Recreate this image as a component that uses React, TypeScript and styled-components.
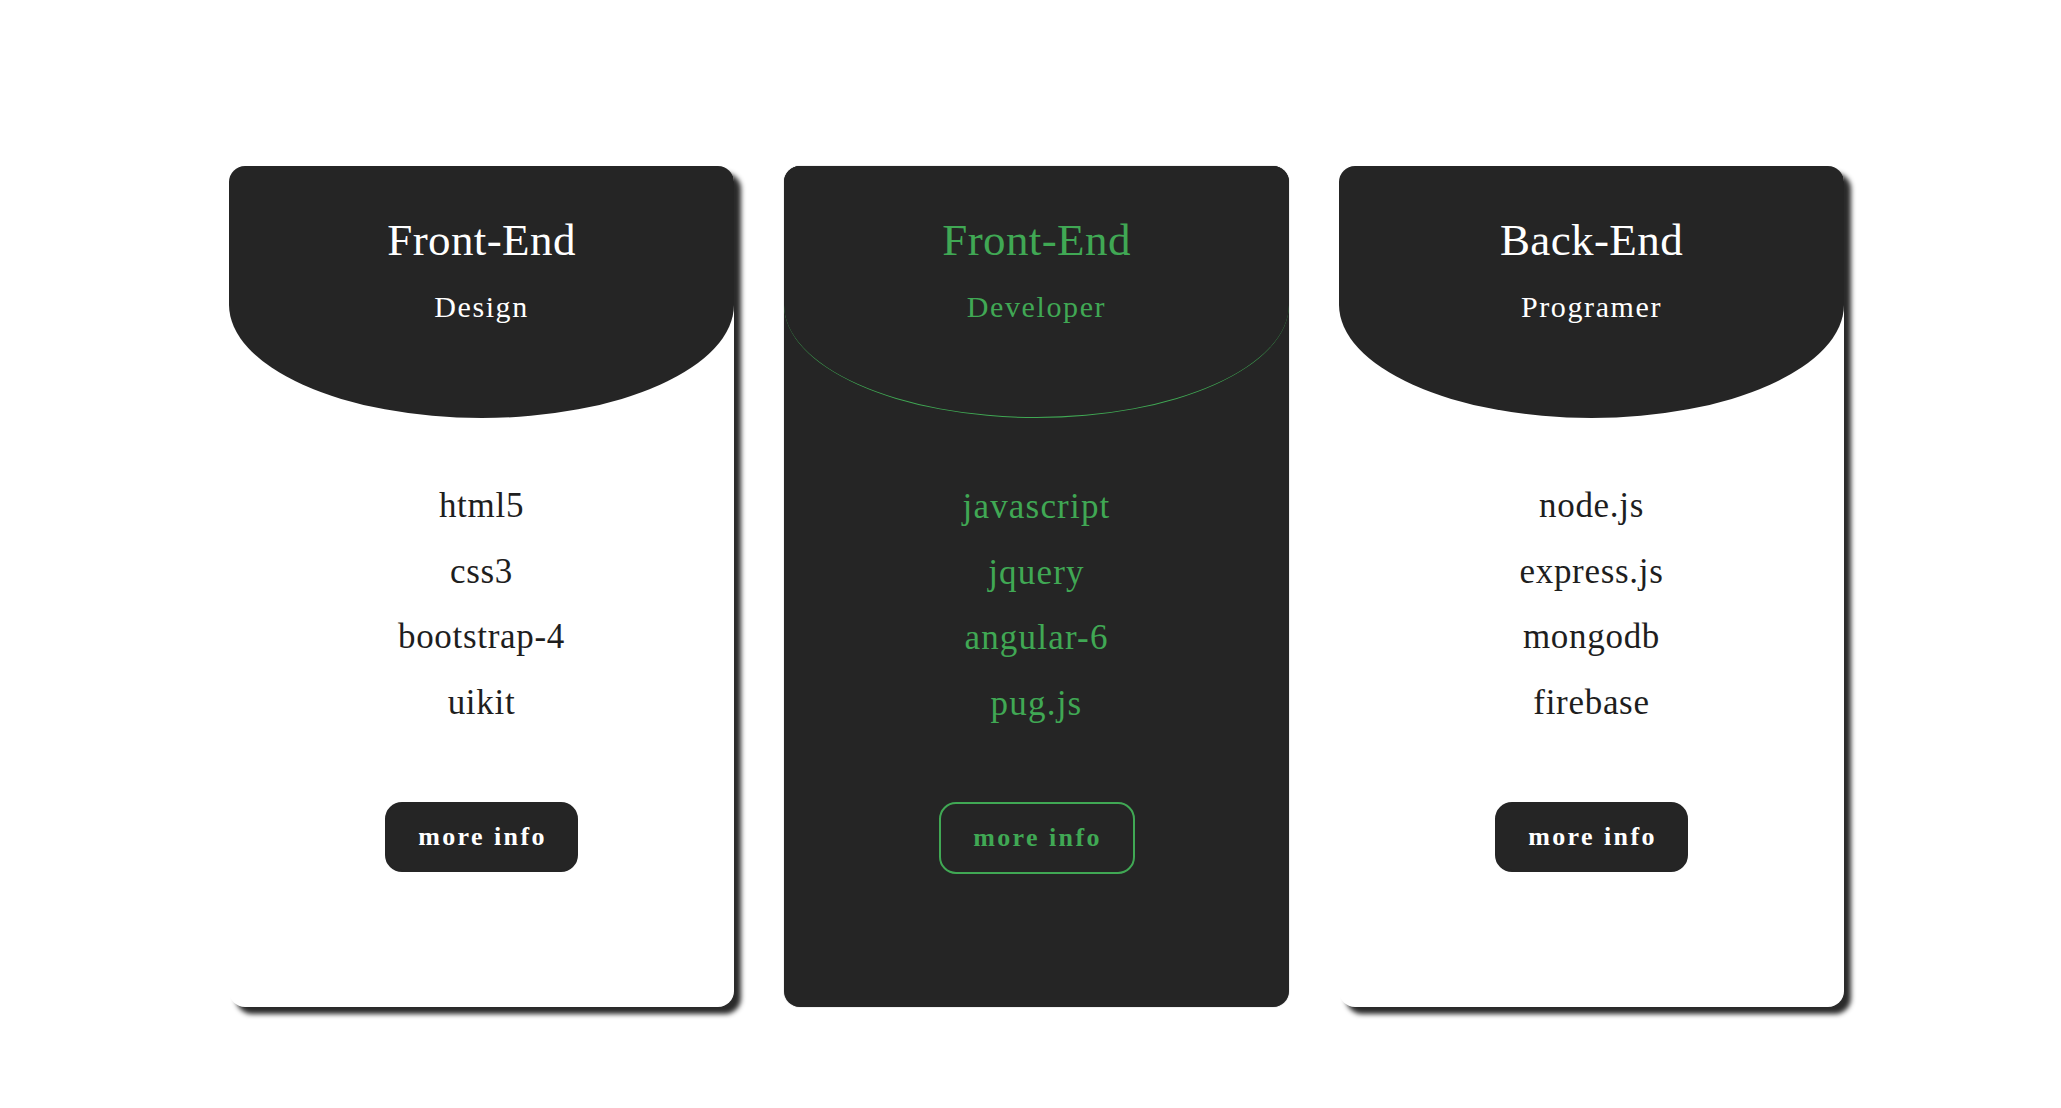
import React from "react";
import styled, { createGlobalStyle, css } from "styled-components";

const GREEN = "#40a854";
const DARK = "#252525";

const Global = createGlobalStyle`
  html, body {
    margin: 0;
    padding: 0;
    background: #ffffff;
  }
  body {
    font-family: "Liberation Serif", "Times New Roman", serif;
  }
`;

const Page = styled.main`
  display: flex;
  justify-content: center;
  gap: 50px;
  padding: 166px 0 0 12px;
  min-height: 1108px;
  box-sizing: border-box;
`;

const Card = styled.section<{ $active?: boolean }>`
  width: 505px;
  height: 841px;
  border-radius: 16px;
  overflow: hidden;
  display: flex;
  flex-direction: column;
  align-items: stretch;
  background: ${(p) => (p.$active ? DARK : "#ffffff")};
  box-shadow: ${(p) =>
    p.$active ? "0 0 1px rgba(0,0,0,0.55)" : "7px 7px 5px #2a2a2a"};
`;

const Header = styled.header<{ $active?: boolean }>`
  height: 252px;
  box-sizing: border-box;
  padding-top: 52px;
  display: flex;
  flex-direction: column;
  align-items: center;
  background: ${DARK};
  border-radius: 0 0 50% 50% / 0 0 45% 45%;
  color: ${(p) => (p.$active ? GREEN : "#ffffff")};
  ${(p) =>
    p.$active &&
    css`
      border-bottom: 1.5px solid ${GREEN};
    `}
`;

const Title = styled.h2`
  margin: 0;
  font-weight: 400;
  font-size: 45px;
  line-height: 45px;
  letter-spacing: 0.4px;
`;

const Subtitle = styled.h3`
  margin: 29px 0 0;
  font-weight: 400;
  font-size: 30px;
  line-height: 30px;
  letter-spacing: 1.6px;
`;

const List = styled.ul<{ $active?: boolean }>`
  list-style: none;
  margin: 55px 0 0;
  padding: 0;
  display: flex;
  flex-direction: column;
  align-items: center;
  color: ${(p) => (p.$active ? GREEN : "#1e1e1e")};
`;

const Item = styled.li<{ $active?: boolean }>`
  font-size: 35px;
  line-height: 65.6px;
  height: 65.6px;
  letter-spacing: ${(p) => (p.$active ? "1.2px" : "0.7px")};
  ${(p) =>
    p.$active &&
    css`
      transform: translateY(1px);
    `}
`;

const Footer = styled.div`
  display: flex;
  justify-content: center;
  margin-top: 67px;
`;

const Button = styled.button<{ $active?: boolean }>`
  box-sizing: border-box;
  width: ${(p) => (p.$active ? "196px" : "193px")};
  height: ${(p) => (p.$active ? "72px" : "70px")};
  border-radius: 17px;
  border: 2px solid ${(p) => (p.$active ? GREEN : DARK)};
  background: ${DARK};
  color: ${(p) => (p.$active ? GREEN : "#ffffff")};
  font-family: "Liberation Serif", "Times New Roman", serif;
  font-weight: 700;
  font-size: 26px;
  letter-spacing: 2.4px;
  padding: 0 0 0 2px;
  cursor: pointer;
`;

type CardData = {
  title: string;
  subtitle: string;
  items: string[];
  active?: boolean;
};

const cards: CardData[] = [
  { title: "Front-End", subtitle: "Design", items: ["html5", "css3", "bootstrap-4", "uikit"] },
  {
    title: "Front-End",
    subtitle: "Developer",
    items: ["javascript", "jquery", "angular-6", "pug.js"],
    active: true,
  },
  { title: "Back-End", subtitle: "Programer", items: ["node.js", "express.js", "mongodb", "firebase"] },
];

export default function App() {
  return (
    <>
      <Global />
      <Page>
        {cards.map((c, i) => (
          <Card key={i} $active={c.active}>
            <Header $active={c.active}>
              <Title>{c.title}</Title>
              <Subtitle>{c.subtitle}</Subtitle>
            </Header>
            <List $active={c.active}>
              {c.items.map((it) => (
                <Item key={it} $active={c.active}>
                  {it}
                </Item>
              ))}
            </List>
            <Footer>
              <Button $active={c.active}>more info</Button>
            </Footer>
          </Card>
        ))}
      </Page>
    </>
  );
}
